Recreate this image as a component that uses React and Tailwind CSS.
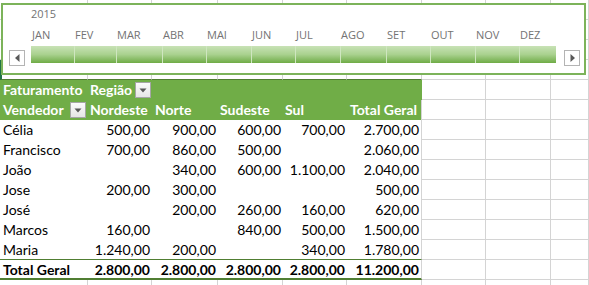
import React from 'react';

const cols = [88, 64, 66, 65, 64, 75];
const rest = [64, 65, 38];

const months = [
  ['JAN', 43], ['FEV', 42], ['MAR', 46], ['ABR', 44], ['MAI', 45], ['JUN', 44],
  ['JUL', 45], ['AGO', 46], ['SET', 44], ['OUT', 45], ['NOV', 44], ['DEZ', 37],
];

const rows = [
  ['Célia', '500,00', '900,00', '600,00', '700,00', '2.700,00'],
  ['Francisco', '700,00', '860,00', '500,00', '', '2.060,00'],
  ['João', '', '340,00', '600,00', '1.100,00', '2.040,00'],
  ['Jose', '200,00', '300,00', '', '', '500,00'],
  ['José', '', '200,00', '260,00', '160,00', '620,00'],
  ['Marcos', '160,00', '', '840,00', '500,00', '1.500,00'],
  ['Maria', '1.240,00', '200,00', '', '340,00', '1.780,00'],
];

const totals = ['Total Geral', '2.800,00', '2.800,00', '2.800,00', '2.800,00', '11.200,00'];

// plain grid cells to the right of the pivot
const GridTail = () => (
  <>
    {rest.map((w, i) => (
      <div key={i} className="h-5 shrink-0 border-r border-b border-[#d4d4d4]" style={{ width: w }} />
    ))}
  </>
);

const EmptyRow = () => (
  <div className="flex">
    {cols.map((w, i) => (
      <div key={i} className="h-5 shrink-0 border-r border-b border-[#d4d4d4]" style={{ width: w }} />
    ))}
    <GridTail />
  </div>
);

const Dropdown = () => (
  <div className="w-4 h-4 shrink-0 bg-gradient-to-b from-[#fbfbfb] to-[#e6e6e6] border border-[#a6a6a6] flex items-center justify-center">
    <svg width="8" height="5" viewBox="0 0 8 5">
      <path d="M0.5 0.5 L7.5 0.5 L4 4.5 Z" fill="#595959" />
    </svg>
  </div>
);

const Timeline = () => (
  <div className="absolute left-px top-[3px] w-[585px] h-[72px] bg-white border-2 border-[#7cb35a] flex font-['Open_Sans',sans-serif] text-[#737373]">
    <div className="w-[28px] flex flex-col justify-end pb-[7px] pl-[6px]">
      <div className="w-4 h-4 border border-[#b4b4b4] flex items-center justify-center">
        <svg width="5" height="8" viewBox="0 0 5 8">
          <path d="M4.5 0 L4.5 8 L0 4 Z" fill="#595959" />
        </svg>
      </div>
    </div>
    <div className="w-[525px] flex flex-col">
      <div className="text-[11px] leading-[14px] pt-[2px]">2015</div>
      <div className="flex mt-[7px] text-[11px] leading-[14px]">
        {months.map(([m, w]) => (
          <div key={m} className="pl-px shrink-0" style={{ width: w }}>{m}</div>
        ))}
      </div>
      <div className="flex mt-[4px] h-[17px] bg-gradient-to-b from-[#c8e2b6] via-[#a9d18e] to-[#6fab45]">
        {months.map(([m, w], i) => (
          <div key={m} className={i ? 'shrink-0 border-l border-[#cfe6c0]' : 'shrink-0'} style={{ width: w }} />
        ))}
      </div>
    </div>
    <div className="flex flex-col justify-end pb-[7px] pl-[8px]">
      <div className="w-4 h-4 border border-[#b4b4b4] flex items-center justify-center">
        <svg width="5" height="8" viewBox="0 0 5 8">
          <path d="M0.5 0 L0.5 8 L5 4 Z" fill="#595959" />
        </svg>
      </div>
    </div>
  </div>
);

export default function App() {
  return (
    <div className="relative w-[589px] h-[285px] overflow-hidden bg-white font-['Lato',sans-serif] text-[14px] leading-5 text-black">
      <EmptyRow />
      <EmptyRow />
      <EmptyRow />
      <div className="flex">
        {cols.map((w, i) => (
          <div
            key={i}
            className={i === 0 ? 'h-5 shrink-0 border-l-2 border-r border-b border-l-[#217346] border-r-[#d4d4d4] border-b-[#507e32]' : 'h-5 shrink-0 border-r border-b border-r-[#d4d4d4] border-b-[#507e32]'}
            style={{ width: w }}
          />
        ))}
        <GridTail />
      </div>

      {/* pivot header */}
      <div className="flex">
        <div className="w-[422px] h-5 bg-[#70ad47] text-white font-bold flex">
          <div className="w-[88px] pl-[3px]">Faturamento</div>
          <div className="w-[64px] pl-[2px] flex items-center gap-[3px]">
            <span>Região</span>
            <Dropdown />
          </div>
        </div>
        <GridTail />
      </div>
      <div className="flex">
        <div className="w-[422px] h-5 bg-[#70ad47] text-white font-bold flex border-r border-[#d4d4d4]">
          <div className="w-[88px] pl-[3px] flex items-center justify-between pr-[2px]">
            <span>Vendedor</span>
            <Dropdown />
          </div>
          <div className="w-[64px] pl-[2px]">Nordeste</div>
          <div className="w-[66px] pl-[3px]">Norte</div>
          <div className="w-[65px] pl-[2px]">Sudeste</div>
          <div className="w-[64px] pl-[2px]">Sul</div>
          <div className="w-[74px] pl-[3px] whitespace-nowrap">Total Geral</div>
        </div>
        <GridTail />
      </div>

      {/* body */}
      {rows.map((r) => (
        <div key={r[0]} className="flex">
          <div className={r[0] === 'Maria' ? 'w-[422px] h-5 flex border-r border-r-[#d4d4d4] border-b border-b-[#507e32]' : 'w-[422px] h-5 flex border-r border-[#d4d4d4]'}>
            {r.map((c, i) => (
              <div
                key={i}
                className={i === 0 ? 'pl-[3px] shrink-0' : 'text-right pr-[2px] shrink-0'}
                style={{ width: i === 5 ? 74 : cols[i] }}
              >
                {c}
              </div>
            ))}
          </div>
          <GridTail />
        </div>
      ))}

      <div className="flex">
        <div className="w-[422px] h-5 flex font-bold border-r border-r-[#d4d4d4] border-b-2 border-b-[#507e32]">
          {totals.map((c, i) => (
            <div
              key={i}
              className={i === 0 ? 'pl-[3px] shrink-0' : 'text-right pr-[2px] shrink-0'}
              style={{ width: i === 5 ? 74 : cols[i] }}
            >
              {c}
            </div>
          ))}
        </div>
        <GridTail />
      </div>
      <EmptyRow />

      <Timeline />
    </div>
  );
}
